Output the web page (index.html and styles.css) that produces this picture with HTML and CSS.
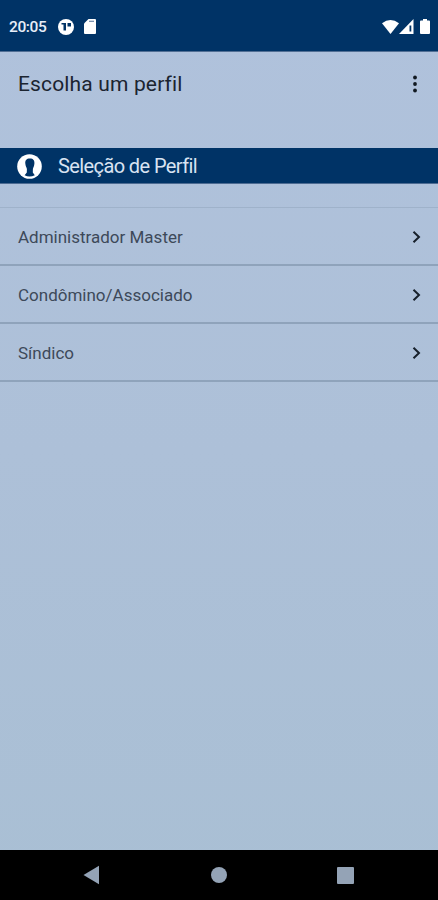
FILE: index.html
```html
<!DOCTYPE html>
<html lang="pt-BR">
<head>
    <meta charset="UTF-8">
    <meta name="viewport" content="width=device-width, initial-scale=1.0">
    <title>Escolha um perfil</title>
    <link rel="stylesheet" href="styles.css">
</head>
<body>
    <!-- Status bar -->
    <div class="status-bar">
        <span class="clock">20:05</span>
        <svg class="app-icon" width="16" height="16" viewBox="0 0 16 16">
            <circle cx="8" cy="8" r="8" fill="#fff"/>
            <path d="M3.5 4H8V11.5H5.5V5.5H3.5ZM9.5 4H13V7.5H9.5Z" fill="#003366"/>
        </svg>
        <svg class="sd-icon" width="12" height="15" viewBox="0 0 12 15">
            <path d="M4.5 0H11Q12 0 12 1V14Q12 15 11 15H1Q0 15 0 14V4.5Z" fill="#fff"/>
            <path d="M5 2.3H10" stroke="#6f87a8" stroke-width="1.2"/>
        </svg>
        <div class="signals">
            <svg width="17" height="14" viewBox="0 0 17 14">
                <path d="M0 3.2Q8.5 -3.2 17 3.2L8.5 14Z" fill="#fff"/>
            </svg>
            <svg width="15" height="15" viewBox="0 0 15 15">
                <path d="M0 15L14.5 0V15Z" fill="#fff"/>
                <path d="M11.4 6.5V12.5" stroke="#003366" stroke-width="1.8"/>
            </svg>
            <svg class="battery" width="10" height="15" viewBox="0 0 10 15">
                <path d="M3 0H7V1.5H9Q10 1.5 10 2.5V14Q10 15 9 15H1Q0 15 0 14V2.5Q0 1.5 1 1.5H3Z" fill="#fff"/>
            </svg>
        </div>
    </div>

    <!-- Toolbar -->
    <header class="toolbar">
        <h1>Escolha um perfil</h1>
        <svg class="menu" width="6" height="18" viewBox="0 0 6 18">
            <circle cx="3" cy="2.5" r="1.9"/>
            <circle cx="3" cy="9" r="1.9"/>
            <circle cx="3" cy="15.5" r="1.9"/>
        </svg>
    </header>

    <main>
        <div class="section-title">
            <svg width="25" height="25" viewBox="0 0 25 25">
                <circle cx="12.5" cy="12.5" r="12.3" fill="#fff"/>
                <path d="M12.9 4.5C9.4 4.5 8 6.5 8.3 9.5C8.5 12 9.6 13.5 9.9 15L9.8 18.5L7.6 21.2Q12.5 23.6 17.8 21.2L15.8 18.5L15.9 15C16.3 13.5 17.2 12 17.4 9.5C17.7 6.5 16.3 4.5 12.9 4.5Z" fill="#003366"/>
            </svg>
            <h2>Seleção de Perfil</h2>
        </div>

        <!-- Profiles -->
        <ul class="profiles">
            <li>
                <span>Administrador Master</span>
                <svg width="9" height="14" viewBox="0 0 9 14"><path d="M1.5 1.7L7 7L1.5 12.3"/></svg>
            </li>
            <li>
                <span>Condômino/Associado</span>
                <svg width="9" height="14" viewBox="0 0 9 14"><path d="M1.5 1.7L7 7L1.5 12.3"/></svg>
            </li>
            <li>
                <span>Síndico</span>
                <svg width="9" height="14" viewBox="0 0 9 14"><path d="M1.5 1.7L7 7L1.5 12.3"/></svg>
            </li>
        </ul>
    </main>

    <!-- Navigation bar -->
    <nav class="nav-bar">
        <svg width="17" height="20" viewBox="0 0 17 20"><path d="M0.5 10L16 0.8V19.2Z"/></svg>
        <svg width="16" height="16" viewBox="0 0 16 16"><circle cx="8" cy="8" r="8"/></svg>
        <svg width="17" height="17" viewBox="0 0 17 17"><rect width="17" height="17" rx="1"/></svg>
    </nav>
</body>
</html>
```
FILE: styles.css
```css
* {
    box-sizing: border-box;
}

body {
    margin: 0;
    height: 900px;
    display: flex;
    flex-direction: column;
    background: linear-gradient(#b0c2dc, #adc0d8 50%, #a9bfd4);
    font-family: Roboto, sans-serif;
    overflow: hidden;
}

svg {
    display: block;
    flex: none;
}

.status-bar {
    display: flex;
    align-items: center;
    height: 52px;
    padding: 2px 8px 0 9px;
    background-color: #003366;
    border-bottom: 1px solid #526f94;
    color: #e8eef8;
}

.clock {
    width: 49px;
    font-size: 15.5px;
    font-weight: 500;
    letter-spacing: -0.4px;
}

.sd-icon {
    margin-left: 10px;
}

.signals {
    display: flex;
    align-items: center;
    margin-left: auto;
}

.battery {
    margin-left: 6px;
}

.toolbar {
    display: flex;
    align-items: center;
    justify-content: space-between;
    height: 62px;
    padding: 1px 20px 0 18px;
}

.toolbar h1 {
    margin: 0;
    color: #1b2430;
    font-size: 21px;
    font-weight: 400;
    letter-spacing: 0.15px;
}

.menu {
    fill: #101820;
}

main {
    flex: 1;
    padding-top: 34px;
}

.section-title {
    display: flex;
    align-items: center;
    height: 36px;
    padding: 1px 17px 0;
    gap: 16px;
    background-color: #003366;
    border-bottom: 1px solid #4d6b92;
}

.section-title h2 {
    margin: 0;
    color: #d9e3f2;
    font-size: 20px;
    font-weight: 400;
    letter-spacing: -0.6px;
}

.profiles {
    list-style: none;
    margin: 23px 0 0;
    padding: 0;
    border-top: 1px solid #9fb2ca;
}

.profiles li {
    display: flex;
    align-items: center;
    justify-content: space-between;
    height: 58px;
    padding: 2px 17px 0 18px;
    border-bottom: 2px solid #8fa3bb;
    color: #3d4959;
    font-size: 17px;
}

.profiles path {
    fill: none;
    stroke: #17202b;
    stroke-width: 2;
}

.nav-bar {
    display: flex;
    align-items: center;
    justify-content: space-between;
    height: 50px;
    padding: 0 84px 0 83px;
    background-color: #000;
    fill: #94a3b6;
}
```
